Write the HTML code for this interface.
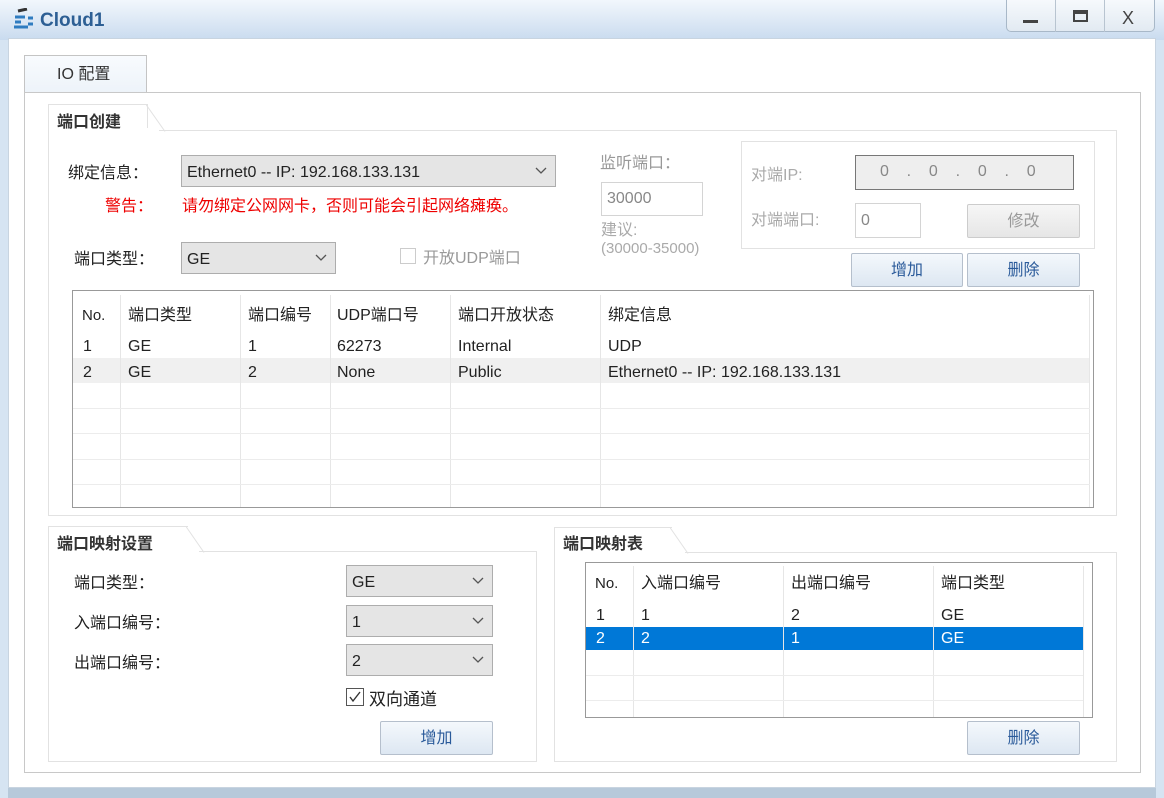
<!DOCTYPE html>
<html><head><meta charset="utf-8"><style>
*{margin:0;padding:0;box-sizing:border-box}
body{width:1164px;height:798px;position:relative;overflow:hidden;background:#d6e4f2;font-family:"Liberation Sans","Noto Sans CJK SC",sans-serif;font-size:16px;color:#222}
.a{position:absolute}
.t{position:absolute;white-space:nowrap;line-height:20px;margin-top:2px}
.combo{position:absolute;background:#e5e5e5;border:1px solid #adadad;padding-left:5px;line-height:33px;font-size:16px}
.combo svg{position:absolute;right:8px;top:11px}
.btn{position:absolute;border:1px solid #b5bfcc;border-radius:2px;background:linear-gradient(#f4f8fc,#dde7f2);text-align:center;color:#2a5a9a;font-size:16px}
.grp{position:absolute;border:1px solid #e2e2e2;background:#fff}
.gt{position:absolute;font-weight:bold;font-size:16px;color:#333;background:#fff;line-height:20px;margin-top:2px}
.vl{position:absolute;width:1px;background:#e6e6e6}
.hl{position:absolute;height:1px;background:#ececec}
</style></head><body>
<div class="a" style="left:0;top:0;width:1164px;height:40px;background:linear-gradient(#f2f7fc,#c9dbef)"></div>
<svg class="a" style="left:12px;top:8px" width="24" height="24" viewBox="0 0 24 24"><path d="M6 3l9-2" stroke="#333" stroke-width="3"/><path d="M3 9h10M3 14h6M2 19h14M16 10h5M16 16h5" stroke="#2f7cc0" stroke-width="3"/></svg>
<div class="t" style="left:40px;top:9px;font-size:19px;font-weight:bold;color:#2d5f94">Cloud1</div>
<div class="a" style="left:1006px;top:0;width:149px;height:32px;border:1px solid #a8b8c8;border-top:none;border-radius:0 0 5px 5px;background:linear-gradient(#f6f9fc,#e2eaf2)"></div>
<div class="a" style="left:1055px;top:0;width:1px;height:32px;background:#b8c4d0"></div>
<div class="a" style="left:1104px;top:0;width:1px;height:32px;background:#b8c4d0"></div>
<div class="a" style="left:1023px;top:20px;width:15px;height:3px;background:#444"></div>
<div class="a" style="left:1073px;top:10px;width:15px;height:12px;border:2px solid #444;border-top-width:4px"></div>
<div class="t" style="left:1122px;top:6px;font-size:18px;color:#444">X</div>
<div class="a" style="left:8px;top:38px;width:1148px;height:750px;background:#fff;border:1px solid #c8d4e0"></div>
<div class="a" style="left:8px;top:788px;width:1148px;height:10px;background:#b7c9da"></div>
<div class="a" style="left:24px;top:55px;width:123px;height:38px;border:1px solid #c4c4c4;border-bottom:none;background:linear-gradient(#f8fbfe,#edf3f9)"></div>
<div class="t" style="left:57px;top:63px;font-size:16px;color:#333">IO 配置</div>
<div class="a" style="left:24px;top:92px;width:1117px;height:681px;border:1px solid #c8c8c8"></div>

<!-- 端口创建 -->
<div class="grp" style="left:48px;top:130px;width:1069px;height:386px"></div>
<div class="a" style="left:48px;top:104px;width:100px;height:28px;border:1px solid #e2e2e2;border-bottom:none;background:#fff"></div>
<svg class="a" style="left:146px;top:104px" width="20" height="28"><path d="M0 0.5L19 27.5" stroke="#e2e2e2"/></svg>
<div class="a" style="left:49px;top:128px;width:110px;height:4px;background:#fff"></div>
<div class="gt" style="left:57px;top:111px">端口创建</div>
<div class="t" style="left:68px;top:162px">绑定信息：</div>
<div class="t" style="left:105px;top:195px;color:#e00">警告：</div>
<div class="t" style="left:182px;top:195px;color:#e00;font-size:16px">请勿绑定公网网卡，否则可能会引起网络瘫痪。</div>
<div class="combo" style="left:181px;top:155px;width:375px;height:32px">Ethernet0 -- IP: 192.168.133.131<svg width="12" height="8"><path d="M1 1l5 5 5-5" stroke="#555" fill="none" stroke-width="1.3"/></svg></div>
<div class="t" style="left:74px;top:248px">端口类型：</div>
<div class="combo" style="left:181px;top:242px;width:155px;height:32px">GE<svg width="12" height="8"><path d="M1 1l5 5 5-5" stroke="#555" fill="none" stroke-width="1.3"/></svg></div>
<div class="a" style="left:400px;top:248px;width:16px;height:16px;border:1px solid #ccc"></div>
<div class="t" style="left:423px;top:247px;color:#999">开放UDP端口</div>
<div class="t" style="left:600px;top:152px;color:#999;font-size:16px">监听端口：</div>
<div class="a" style="left:601px;top:182px;width:102px;height:34px;border:1px solid #d4d4d4;padding:0 5px;line-height:32px;color:#888">30000</div>
<div class="t" style="left:601px;top:219px;color:#aaa">建议:</div>
<div class="t" style="left:601px;top:237px;color:#aaa;font-size:15px">(30000-35000)</div>
<div class="a" style="left:741px;top:141px;width:354px;height:108px;border:1px solid #e2e2e2"></div>
<div class="t" style="left:751px;top:164px;color:#aaa">对端IP:</div>
<div class="a" style="left:855px;top:155px;width:219px;height:35px;background:#eee;border:1px solid #777;color:#888;font-size:16px;padding:0 0 0 24px;line-height:32px">0&nbsp;&nbsp;&nbsp;&nbsp;.&nbsp;&nbsp;&nbsp;&nbsp;0&nbsp;&nbsp;&nbsp;&nbsp;.&nbsp;&nbsp;&nbsp;&nbsp;0&nbsp;&nbsp;&nbsp;&nbsp;.&nbsp;&nbsp;&nbsp;&nbsp;0</div>
<div class="t" style="left:751px;top:209px;color:#aaa">对端端口:</div>
<div class="a" style="left:855px;top:203px;width:66px;height:35px;border:1px solid #d4d4d4;padding:0 5px;line-height:33px;color:#888">0</div>
<div class="btn" style="left:967px;top:204px;width:113px;height:34px;line-height:33px;color:#999;background:linear-gradient(#f6f6f6,#e6e6e6);border-color:#ccc">修改</div>
<div class="btn" style="left:851px;top:253px;width:112px;height:34px;line-height:33px">增加</div>
<div class="btn" style="left:967px;top:253px;width:113px;height:34px;line-height:33px">删除</div>

<!-- table -->
<div class="a" style="left:72px;top:290px;width:1022px;height:218px;border:1px solid #999;background:#fff"></div>
<div class="a" style="left:73px;top:358px;width:1017px;height:25px;background:#f0f0f0"></div>
<div class="vl" style="left:120px;top:295px;height:212px"></div>
<div class="vl" style="left:240px;top:295px;height:212px"></div>
<div class="vl" style="left:330px;top:295px;height:212px"></div>
<div class="vl" style="left:450px;top:295px;height:212px"></div>
<div class="vl" style="left:600px;top:295px;height:212px"></div>
<div class="vl" style="left:1089px;top:295px;height:212px"></div>
<div class="hl" style="left:73px;top:408px;width:1017px"></div>
<div class="hl" style="left:73px;top:433px;width:1017px"></div>
<div class="hl" style="left:73px;top:459px;width:1017px"></div>
<div class="hl" style="left:73px;top:484px;width:1017px"></div>
<div class="t" style="left:82px;top:304px;font-size:15px">No.</div><div class="t" style="left:128px;top:304px">端口类型</div><div class="t" style="left:248px;top:304px">端口编号</div><div class="t" style="left:337px;top:304px">UDP端口号</div><div class="t" style="left:458px;top:304px">端口开放状态</div><div class="t" style="left:608px;top:304px">绑定信息</div>
<div class="t" style="left:83px;top:335px">1</div><div class="t" style="left:128px;top:335px">GE</div><div class="t" style="left:248px;top:335px">1</div><div class="t" style="left:337px;top:335px">62273</div><div class="t" style="left:458px;top:335px">Internal</div><div class="t" style="left:608px;top:335px">UDP</div>
<div class="t" style="left:83px;top:361px">2</div><div class="t" style="left:128px;top:361px">GE</div><div class="t" style="left:248px;top:361px">2</div><div class="t" style="left:337px;top:361px">None</div><div class="t" style="left:458px;top:361px">Public</div><div class="t" style="left:608px;top:361px">Ethernet0 -- IP: 192.168.133.131</div>

<!-- 端口映射设置 -->
<div class="grp" style="left:48px;top:551px;width:489px;height:211px"></div>
<div class="a" style="left:48px;top:526px;width:140px;height:27px;border:1px solid #e2e2e2;border-bottom:none;background:#fff;border-right:none"></div>
<svg class="a" style="left:186px;top:526px" width="20" height="27"><path d="M0 0.5L18 26.5" stroke="#e2e2e2"/></svg>
<div class="a" style="left:49px;top:550px;width:150px;height:4px;background:#fff"></div>
<div class="gt" style="left:57px;top:533px">端口映射设置</div>
<div class="t" style="left:74px;top:572px">端口类型：</div>
<div class="t" style="left:74px;top:612px">入端口编号：</div>
<div class="t" style="left:74px;top:652px">出端口编号：</div>
<div class="combo" style="left:346px;top:565px;width:147px;height:32px">GE<svg width="12" height="8"><path d="M1 1l5 5 5-5" stroke="#555" fill="none" stroke-width="1.3"/></svg></div>
<div class="combo" style="left:346px;top:605px;width:147px;height:32px">1<svg width="12" height="8"><path d="M1 1l5 5 5-5" stroke="#555" fill="none" stroke-width="1.3"/></svg></div>
<div class="combo" style="left:346px;top:644px;width:147px;height:32px">2<svg width="12" height="8"><path d="M1 1l5 5 5-5" stroke="#555" fill="none" stroke-width="1.3"/></svg></div>
<div class="a" style="left:346px;top:688px;width:18px;height:18px;border:1px solid #555"><svg width="16" height="16" style="position:absolute;left:0;top:0"><path d="M3 8l3 4 7-9" stroke="#333" fill="none" stroke-width="1.4"/></svg></div>
<div class="t" style="left:369px;top:688px;font-size:17px">双向通道</div>
<div class="btn" style="left:380px;top:721px;width:113px;height:34px;line-height:33px">增加</div>

<!-- 端口映射表 -->
<div class="grp" style="left:554px;top:552px;width:563px;height:210px"></div>
<div class="a" style="left:554px;top:527px;width:118px;height:27px;border:1px solid #e2e2e2;border-bottom:none;border-right:none;background:#fff"></div>
<svg class="a" style="left:670px;top:527px" width="20" height="27"><path d="M0 0.5L18 26.5" stroke="#e2e2e2"/></svg>
<div class="a" style="left:555px;top:551px;width:130px;height:4px;background:#fff"></div>
<div class="gt" style="left:563px;top:533px">端口映射表</div>
<div class="a" style="left:585px;top:562px;width:508px;height:156px;border:1px solid #999;background:#fff"></div>
<div class="a" style="left:586px;top:627px;width:497px;height:23px;background:#0078d7"></div>
<div class="vl" style="left:633px;top:566px;height:151px"></div>
<div class="vl" style="left:783px;top:566px;height:151px"></div>
<div class="vl" style="left:933px;top:566px;height:151px"></div>
<div class="vl" style="left:1083px;top:566px;height:151px"></div>
<div class="hl" style="left:586px;top:675px;width:497px"></div>
<div class="hl" style="left:586px;top:700px;width:497px"></div>
<div class="t" style="left:595px;top:572px;font-size:15px">No.</div><div class="t" style="left:641px;top:572px">入端口编号</div><div class="t" style="left:791px;top:572px">出端口编号</div><div class="t" style="left:941px;top:572px">端口类型</div>
<div class="t" style="left:596px;top:604px">1</div><div class="t" style="left:641px;top:604px">1</div><div class="t" style="left:791px;top:604px">2</div><div class="t" style="left:941px;top:604px">GE</div>
<div class="t" style="left:596px;top:627px;color:#fff">2</div><div class="t" style="left:641px;top:627px;color:#fff">2</div><div class="t" style="left:791px;top:627px;color:#fff">1</div><div class="t" style="left:941px;top:627px;color:#fff">GE</div>
<div class="btn" style="left:967px;top:721px;width:113px;height:34px;line-height:33px">删除</div>
</body></html>
